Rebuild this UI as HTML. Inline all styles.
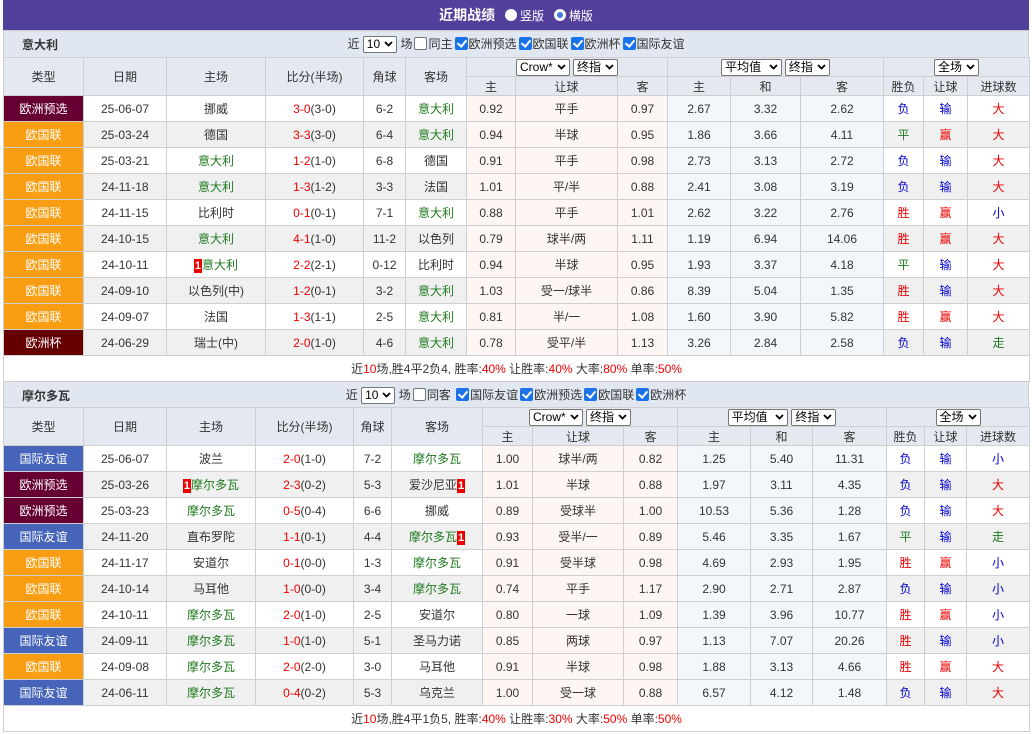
<!DOCTYPE html>
<html><head><meta charset="utf-8">
<style>
*{box-sizing:border-box;margin:0;padding:0}
body{width:1032px;height:734px;background:#fff;font-family:"Liberation Sans","Noto Sans CJK SC",sans-serif;font-size:12px;color:#333;position:relative;overflow:hidden}
.top{position:absolute;left:3px;top:0;width:1026px;height:30px;background:#523f9b;color:#fff;text-align:center;line-height:30px;font-size:14px;font-weight:bold}
.top .r{display:inline-block;width:12px;height:12px;border-radius:50%;background:#fff;vertical-align:-1px;margin:0 3px 0 6px}
.top .r.on{border:3px solid #fff;background:#3b7be0;box-shadow:0 0 0 1px #3b7be0 inset}
.top span.t{font-weight:normal;font-size:12px}
.sec{position:absolute;left:3px;width:1026px}
.title{height:27px;background:#e1e7f0;border:1px solid #ccc;border-bottom:none;position:relative;line-height:27px}
.title b{position:absolute;left:18px;top:1px;font-size:12px}
.title .ctl{position:absolute;left:0;right:0;text-align:center}
.sel{display:inline-block;border:1px solid #767676;background:#fff;height:17px;line-height:15px;padding:0 3px;border-radius:2px;font-size:12px;vertical-align:middle;color:#000}
.sel svg{margin-left:4px;vertical-align:1px}
.cb{display:inline-block;width:13px;height:13px;border:1px solid #767676;border-radius:2px;background:#fff;vertical-align:middle;margin:-2px 1px 0 2px;position:relative}
.cb.on{background:#1a73e8;border-color:#1a73e8}
.cb.on:after{content:"";position:absolute;left:3px;top:0px;width:4px;height:7px;border:solid #fff;border-width:0 2px 2px 0;transform:rotate(40deg)}
table{border-collapse:collapse;table-layout:fixed;width:1026px}
td{border:1px solid #cfcfcf;text-align:center;height:26px;white-space:nowrap;overflow:hidden;font-size:12px}
tr.h td{background:#e4e9f1;height:19px;color:#333}
tr.g td{background:#f0f0f0}
td.tp{color:#fff}
.m{background:#660033!important}.o{background:#f99e12!important}.c{background:#660000!important}.f{background:#4665ba!important}
tr td.p{background:#fdf6f3!important}
tr td.q{background:#f1f7fb!important}
.rd{color:#e00}.gr{color:#207a20}.bl{color:#00c}
.rc{display:inline-block;background:#e00;color:#fff;font-weight:bold;width:8px;line-height:14px;font-size:11px}
td.sum{background:#fff;height:26px}
</style></head><body>
<div class="top">近期战绩 <span class="r"></span><span class="t">竖版</span> <span class="r on"></span><span class="t">横版</span></div>

<div class="sec" style="top:30px">
<div class="title"><b>意大利</b><div class="ctl">近 <span class="sel">10<svg width="9" height="6" viewBox="0 0 9 6"><path d="M1 1l3.5 3.5L8 1" stroke="#000" stroke-width="1.8" fill="none"/></svg></span> 场<span class="cb"></span>同主<span class="cb on"></span>欧洲预选<span class="cb on"></span>欧国联<span class="cb on"></span>欧洲杯<span class="cb on"></span>国际友谊</div></div>
<table>
<colgroup><col style="width:80px"><col style="width:83px"><col style="width:99px"><col style="width:98px"><col style="width:42px"><col style="width:61px"><col style="width:49px"><col style="width:102px"><col style="width:50px"><col style="width:63px"><col style="width:70px"><col style="width:83px"><col style="width:40px"><col style="width:44px"><col style="width:62px"></colgroup>
<tr class="h"><td rowspan="2">类型</td><td rowspan="2">日期</td><td rowspan="2">主场</td><td rowspan="2">比分(半场)</td><td rowspan="2">角球</td><td rowspan="2">客场</td><td colspan="3"><span class="sel">Crow*<svg width="9" height="6" viewBox="0 0 9 6"><path d="M1 1l3.5 3.5L8 1" stroke="#000" stroke-width="1.8" fill="none"/></svg></span> <span class="sel">终指<svg width="9" height="6" viewBox="0 0 9 6"><path d="M1 1l3.5 3.5L8 1" stroke="#000" stroke-width="1.8" fill="none"/></svg></span></td><td colspan="3"><span class="sel">平均值 <svg width="9" height="6" viewBox="0 0 9 6"><path d="M1 1l3.5 3.5L8 1" stroke="#000" stroke-width="1.8" fill="none"/></svg></span> <span class="sel">终指<svg width="9" height="6" viewBox="0 0 9 6"><path d="M1 1l3.5 3.5L8 1" stroke="#000" stroke-width="1.8" fill="none"/></svg></span></td><td colspan="3"><span class="sel">全场<svg width="9" height="6" viewBox="0 0 9 6"><path d="M1 1l3.5 3.5L8 1" stroke="#000" stroke-width="1.8" fill="none"/></svg></span></td></tr>
<tr class="h"><td>主</td><td>让球</td><td>客</td><td>主</td><td>和</td><td>客</td><td>胜负</td><td>让球</td><td>进球数</td></tr>
<tr><td class="tp m">欧洲预选</td><td>25-06-07</td><td>挪威</td><td><span class="rd">3-0</span>(3-0)</td><td>6-2</td><td class="gr">意大利</td><td class="p">0.92</td><td class="p">平手</td><td class="p">0.97</td><td class="q">2.67</td><td class="q">3.32</td><td class="q">2.62</td><td class="bl">负</td><td class="bl">输</td><td class="rd">大</td></tr>
<tr class="g"><td class="tp o">欧国联</td><td>25-03-24</td><td>德国</td><td><span class="rd">3-3</span>(3-0)</td><td>6-4</td><td class="gr">意大利</td><td class="p">0.94</td><td class="p">半球</td><td class="p">0.95</td><td class="q">1.86</td><td class="q">3.66</td><td class="q">4.11</td><td class="gr">平</td><td class="rd">赢</td><td class="rd">大</td></tr>
<tr><td class="tp o">欧国联</td><td>25-03-21</td><td class="gr">意大利</td><td><span class="rd">1-2</span>(1-0)</td><td>6-8</td><td>德国</td><td class="p">0.91</td><td class="p">平手</td><td class="p">0.98</td><td class="q">2.73</td><td class="q">3.13</td><td class="q">2.72</td><td class="bl">负</td><td class="bl">输</td><td class="rd">大</td></tr>
<tr class="g"><td class="tp o">欧国联</td><td>24-11-18</td><td class="gr">意大利</td><td><span class="rd">1-3</span>(1-2)</td><td>3-3</td><td>法国</td><td class="p">1.01</td><td class="p">平/半</td><td class="p">0.88</td><td class="q">2.41</td><td class="q">3.08</td><td class="q">3.19</td><td class="bl">负</td><td class="bl">输</td><td class="rd">大</td></tr>
<tr><td class="tp o">欧国联</td><td>24-11-15</td><td>比利时</td><td><span class="rd">0-1</span>(0-1)</td><td>7-1</td><td class="gr">意大利</td><td class="p">0.88</td><td class="p">平手</td><td class="p">1.01</td><td class="q">2.62</td><td class="q">3.22</td><td class="q">2.76</td><td class="rd">胜</td><td class="rd">赢</td><td class="bl">小</td></tr>
<tr class="g"><td class="tp o">欧国联</td><td>24-10-15</td><td class="gr">意大利</td><td><span class="rd">4-1</span>(1-0)</td><td>11-2</td><td>以色列</td><td class="p">0.79</td><td class="p">球半/两</td><td class="p">1.11</td><td class="q">1.19</td><td class="q">6.94</td><td class="q">14.06</td><td class="rd">胜</td><td class="rd">赢</td><td class="rd">大</td></tr>
<tr><td class="tp o">欧国联</td><td>24-10-11</td><td class="gr"><span class="rc">1</span>意大利</td><td><span class="rd">2-2</span>(2-1)</td><td>0-12</td><td>比利时</td><td class="p">0.94</td><td class="p">半球</td><td class="p">0.95</td><td class="q">1.93</td><td class="q">3.37</td><td class="q">4.18</td><td class="gr">平</td><td class="bl">输</td><td class="rd">大</td></tr>
<tr class="g"><td class="tp o">欧国联</td><td>24-09-10</td><td>以色列(中)</td><td><span class="rd">1-2</span>(0-1)</td><td>3-2</td><td class="gr">意大利</td><td class="p">1.03</td><td class="p">受一/球半</td><td class="p">0.86</td><td class="q">8.39</td><td class="q">5.04</td><td class="q">1.35</td><td class="rd">胜</td><td class="bl">输</td><td class="rd">大</td></tr>
<tr><td class="tp o">欧国联</td><td>24-09-07</td><td>法国</td><td><span class="rd">1-3</span>(1-1)</td><td>2-5</td><td class="gr">意大利</td><td class="p">0.81</td><td class="p">半/一</td><td class="p">1.08</td><td class="q">1.60</td><td class="q">3.90</td><td class="q">5.82</td><td class="rd">胜</td><td class="rd">赢</td><td class="rd">大</td></tr>
<tr class="g"><td class="tp c">欧洲杯</td><td>24-06-29</td><td>瑞士(中)</td><td><span class="rd">2-0</span>(1-0)</td><td>4-6</td><td class="gr">意大利</td><td class="p">0.78</td><td class="p">受平/半</td><td class="p">1.13</td><td class="q">3.26</td><td class="q">2.84</td><td class="q">2.58</td><td class="bl">负</td><td class="bl">输</td><td class="gr">走</td></tr>
<tr><td colspan="15" class="sum">近<span class="rd">10</span>场,胜4平2负4, 胜率:<span class="rd">40%</span> 让胜率:<span class="rd">40%</span> 大率:<span class="rd">80%</span> 单率:<span class="rd">50%</span></td></tr>
</table>
</div>

<div class="sec" style="top:381px">
<div class="title" style="height:26px;line-height:26px"><b>摩尔多瓦</b><div class="ctl">近 <span class="sel">10<svg width="9" height="6" viewBox="0 0 9 6"><path d="M1 1l3.5 3.5L8 1" stroke="#000" stroke-width="1.8" fill="none"/></svg></span> 场<span class="cb"></span>同客 <span class="cb on"></span>国际友谊<span class="cb on"></span>欧洲预选<span class="cb on"></span>欧国联<span class="cb on"></span>欧洲杯</div></div>
<table>
<colgroup><col style="width:80px"><col style="width:83px"><col style="width:89px"><col style="width:98px"><col style="width:38px"><col style="width:91px"><col style="width:50px"><col style="width:91px"><col style="width:54px"><col style="width:73px"><col style="width:62px"><col style="width:74px"><col style="width:38px"><col style="width:42px"><col style="width:63px"></colgroup>
<tr class="h"><td rowspan="2">类型</td><td rowspan="2">日期</td><td rowspan="2">主场</td><td rowspan="2">比分(半场)</td><td rowspan="2">角球</td><td rowspan="2">客场</td><td colspan="3"><span class="sel">Crow*<svg width="9" height="6" viewBox="0 0 9 6"><path d="M1 1l3.5 3.5L8 1" stroke="#000" stroke-width="1.8" fill="none"/></svg></span> <span class="sel">终指<svg width="9" height="6" viewBox="0 0 9 6"><path d="M1 1l3.5 3.5L8 1" stroke="#000" stroke-width="1.8" fill="none"/></svg></span></td><td colspan="3"><span class="sel">平均值 <svg width="9" height="6" viewBox="0 0 9 6"><path d="M1 1l3.5 3.5L8 1" stroke="#000" stroke-width="1.8" fill="none"/></svg></span> <span class="sel">终指<svg width="9" height="6" viewBox="0 0 9 6"><path d="M1 1l3.5 3.5L8 1" stroke="#000" stroke-width="1.8" fill="none"/></svg></span></td><td colspan="3"><span class="sel">全场<svg width="9" height="6" viewBox="0 0 9 6"><path d="M1 1l3.5 3.5L8 1" stroke="#000" stroke-width="1.8" fill="none"/></svg></span></td></tr>
<tr class="h"><td>主</td><td>让球</td><td>客</td><td>主</td><td>和</td><td>客</td><td>胜负</td><td>让球</td><td>进球数</td></tr>
<tr><td class="tp f">国际友谊</td><td>25-06-07</td><td>波兰</td><td><span class="rd">2-0</span>(1-0)</td><td>7-2</td><td class="gr">摩尔多瓦</td><td class="p">1.00</td><td class="p">球半/两</td><td class="p">0.82</td><td class="q">1.25</td><td class="q">5.40</td><td class="q">11.31</td><td class="bl">负</td><td class="bl">输</td><td class="bl">小</td></tr>
<tr class="g"><td class="tp m">欧洲预选</td><td>25-03-26</td><td class="gr"><span class="rc">1</span>摩尔多瓦</td><td><span class="rd">2-3</span>(0-2)</td><td>5-3</td><td>爱沙尼亚<span class="rc">1</span></td><td class="p">1.01</td><td class="p">半球</td><td class="p">0.88</td><td class="q">1.97</td><td class="q">3.11</td><td class="q">4.35</td><td class="bl">负</td><td class="bl">输</td><td class="rd">大</td></tr>
<tr><td class="tp m">欧洲预选</td><td>25-03-23</td><td class="gr">摩尔多瓦</td><td><span class="rd">0-5</span>(0-4)</td><td>6-6</td><td>挪威</td><td class="p">0.89</td><td class="p">受球半</td><td class="p">1.00</td><td class="q">10.53</td><td class="q">5.36</td><td class="q">1.28</td><td class="bl">负</td><td class="bl">输</td><td class="rd">大</td></tr>
<tr class="g"><td class="tp f">国际友谊</td><td>24-11-20</td><td>直布罗陀</td><td><span class="rd">1-1</span>(0-1)</td><td>4-4</td><td class="gr">摩尔多瓦<span class="rc">1</span></td><td class="p">0.93</td><td class="p">受半/一</td><td class="p">0.89</td><td class="q">5.46</td><td class="q">3.35</td><td class="q">1.67</td><td class="gr">平</td><td class="bl">输</td><td class="gr">走</td></tr>
<tr><td class="tp o">欧国联</td><td>24-11-17</td><td>安道尔</td><td><span class="rd">0-1</span>(0-0)</td><td>1-3</td><td class="gr">摩尔多瓦</td><td class="p">0.91</td><td class="p">受半球</td><td class="p">0.98</td><td class="q">4.69</td><td class="q">2.93</td><td class="q">1.95</td><td class="rd">胜</td><td class="rd">赢</td><td class="bl">小</td></tr>
<tr class="g"><td class="tp o">欧国联</td><td>24-10-14</td><td>马耳他</td><td><span class="rd">1-0</span>(0-0)</td><td>3-4</td><td class="gr">摩尔多瓦</td><td class="p">0.74</td><td class="p">平手</td><td class="p">1.17</td><td class="q">2.90</td><td class="q">2.71</td><td class="q">2.87</td><td class="bl">负</td><td class="bl">输</td><td class="bl">小</td></tr>
<tr><td class="tp o">欧国联</td><td>24-10-11</td><td class="gr">摩尔多瓦</td><td><span class="rd">2-0</span>(1-0)</td><td>2-5</td><td>安道尔</td><td class="p">0.80</td><td class="p">一球</td><td class="p">1.09</td><td class="q">1.39</td><td class="q">3.96</td><td class="q">10.77</td><td class="rd">胜</td><td class="rd">赢</td><td class="bl">小</td></tr>
<tr class="g"><td class="tp f">国际友谊</td><td>24-09-11</td><td class="gr">摩尔多瓦</td><td><span class="rd">1-0</span>(1-0)</td><td>5-1</td><td>圣马力诺</td><td class="p">0.85</td><td class="p">两球</td><td class="p">0.97</td><td class="q">1.13</td><td class="q">7.07</td><td class="q">20.26</td><td class="rd">胜</td><td class="bl">输</td><td class="bl">小</td></tr>
<tr><td class="tp o">欧国联</td><td>24-09-08</td><td class="gr">摩尔多瓦</td><td><span class="rd">2-0</span>(2-0)</td><td>3-0</td><td>马耳他</td><td class="p">0.91</td><td class="p">半球</td><td class="p">0.98</td><td class="q">1.88</td><td class="q">3.13</td><td class="q">4.66</td><td class="rd">胜</td><td class="rd">赢</td><td class="rd">大</td></tr>
<tr class="g"><td class="tp f">国际友谊</td><td>24-06-11</td><td class="gr">摩尔多瓦</td><td><span class="rd">0-4</span>(0-2)</td><td>5-3</td><td>乌克兰</td><td class="p">1.00</td><td class="p">受一球</td><td class="p">0.88</td><td class="q">6.57</td><td class="q">4.12</td><td class="q">1.48</td><td class="bl">负</td><td class="bl">输</td><td class="rd">大</td></tr>
<tr><td colspan="15" class="sum">近<span class="rd">10</span>场,胜4平1负5, 胜率:<span class="rd">40%</span> 让胜率:<span class="rd">30%</span> 大率:<span class="rd">50%</span> 单率:<span class="rd">50%</span></td></tr>
</table>
</div>
</body></html>
